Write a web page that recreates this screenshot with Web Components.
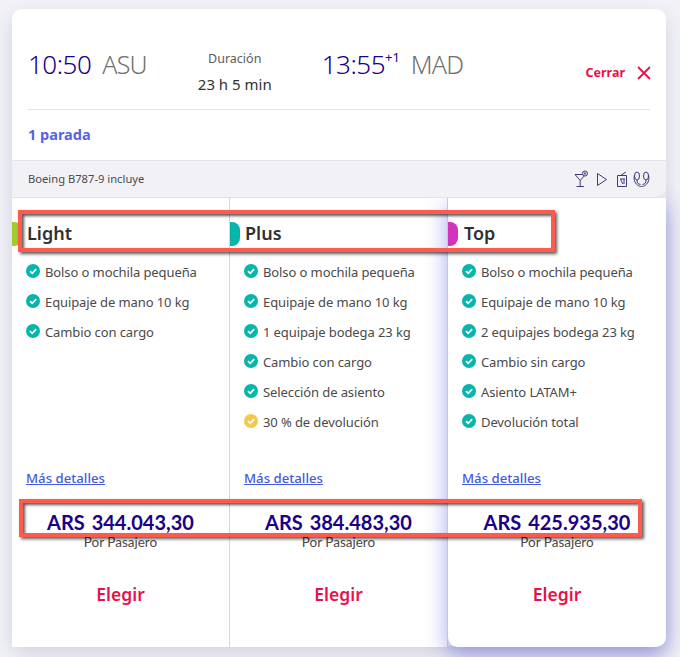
<!DOCTYPE html>
<html lang="es">
<head>
<meta charset="utf-8">
<title>Tarifas</title>
<style>
    html, body { margin: 0; height: 100%; background: #f1f1f7; overflow: hidden; }
    body { font-family: "Noto Sans", "Liberation Sans", sans-serif; color: #303030; }
</style>
</head>
<body>
<fare-panel>
    <flight-summary slot="top"></flight-summary>
    <amenity-bar slot="top">Boeing B787-9 incluye</amenity-bar>
    <fare-column name="Light" tag="#a0cc2c" price="ARS 344.043,30">
        <fare-item>Bolso o mochila pequeña</fare-item>
        <fare-item>Equipaje de mano 10 kg</fare-item>
        <fare-item>Cambio con cargo</fare-item>
    </fare-column>
    <fare-column name="Plus" tag="#07b5ad" price="ARS 384.483,30">
        <fare-item>Bolso o mochila pequeña</fare-item>
        <fare-item>Equipaje de mano 10 kg</fare-item>
        <fare-item>1 equipaje bodega 23 kg</fare-item>
        <fare-item>Cambio con cargo</fare-item>
        <fare-item>Selección de asiento</fare-item>
        <fare-item partial>30 % de devolución</fare-item>
    </fare-column>
    <fare-column name="Top" tag="#d232bc" price="ARS 425.935,30" featured>
        <fare-item>Bolso o mochila pequeña</fare-item>
        <fare-item>Equipaje de mano 10 kg</fare-item>
        <fare-item>2 equipajes bodega 23 kg</fare-item>
        <fare-item>Cambio sin cargo</fare-item>
        <fare-item>Asiento LATAM+</fare-item>
        <fare-item>Devolución total</fare-item>
    </fare-column>
    <mark-box slot="marks" style="left: 6px; top: 201px; width: 537px; height: 42px;"></mark-box>
    <mark-box slot="marks" style="left: 7px; top: 490px; width: 623px; height: 38px;"></mark-box>
</fare-panel>

<script>
class FarePanel extends HTMLElement {
    constructor() {
        super();
        this.attachShadow({mode: 'open'}).innerHTML = `
            <style>
                :host {
                    display: block;
                    position: relative;
                    width: 654px;
                    height: 637px;
                    margin: 9px 0 0 12px;
                    border-radius: 10px;
                    box-shadow: 0 8px 18px rgba(60, 60, 120, 0.16);
                }
                .cols {
                    display: grid;
                    grid-template-columns: 218px 218px 218px;
                    height: 449px;
                }
            </style>
            <slot name="top"></slot>
            <div class="cols"><slot></slot></div>
            <slot name="marks"></slot>
        `;
    }
}

class FlightSummary extends HTMLElement {
    constructor() {
        super();
        this.attachShadow({mode: 'open'}).innerHTML = `
            <style>
                :host { display: block; padding: 0 16px; background: #fff; border-radius: 10px 10px 0 0; position: relative; z-index: 1; }
                .row {
                    display: flex;
                    height: 100px;
                    border-bottom: 1px solid #e1e1e6;
                    align-items: flex-start;
                }
                .time {
                    margin-top: 36px;
                    font-size: 26px;
                    line-height: 38px;
                    font-weight: 300;
                    letter-spacing: -0.5px;
                    color: #1b0088;
                    white-space: nowrap;
                }
                .time sup { font-size: 13px; font-weight: 400; line-height: 0; vertical-align: 12px; letter-spacing: 0; }
                .code { color: #707070; margin-left: 11px; font-size: 25px; letter-spacing: -0.8px; }
                .dur { width: 104px; margin: 40px 0 0 36px; text-align: center; white-space: nowrap; }
                .dur div:first-child { font-size: 12.5px; line-height: 20px; color: #5c5c5c; }
                .dur div:last-child { font-size: 15px; line-height: 30px; color: #303030; }
                .end { margin-left: 35px; }
                .close {
                    margin: 55px -1px 0 auto;
                    display: flex;
                    align-items: center;
                    gap: 12px;
                    font-size: 12.5px;
                    font-weight: 700;
                    color: #e8114b;
                }
                .stops { height: 50px; line-height: 48px; font-size: 14.5px; font-weight: 700; color: #5562e6; }
            </style>
            <div class="row">
                <div class="time">10:50<span class="code">ASU</span></div>
                <div class="dur"><div>Duración</div><div>23 h 5 min</div></div>
                <div class="time end">13:55<sup>+1</sup><span class="code">MAD</span></div>
                <div class="close">Cerrar
                    <svg width="14" height="14" viewBox="0 0 14 14"><path d="M1 1l12 12M13 1L1 13" fill="none" stroke="#e8114b" stroke-width="1.8"/></svg>
                </div>
            </div>
            <div class="stops">1 parada</div>
        `;
    }
}

class AmenityBar extends HTMLElement {
    constructor() {
        super();
        this.attachShadow({mode: 'open'}).innerHTML = `
            <style>
                :host {
                    display: flex;
                    align-items: center;
                    justify-content: space-between;
                    box-sizing: border-box;
                    height: 38px;
                    padding: 0 16px 1px;
                    background: #f1f1f6;
                    border-top: 1px solid #e2e2e7;
                    border-bottom: 1px solid #e2e2e7;
                    border-radius: 0 0 10px 0;
                    font-size: 11.2px;
                    color: #4a4a4a;
                    position: relative;
                    z-index: 1;
                }
                svg { display: block; margin-top: 1px; }
            </style>
            <slot></slot>
            <svg width="76" height="18" viewBox="0 0 76 18" fill="none" stroke="#3f3a78" stroke-width="1">
                <path d="M1 4.500h10.500L6.200 10.500zM6.200 10.500v6M2.500 16.500h7.500"/>
                <circle cx="11" cy="3.500" r="2.500" fill="#f1f1f6"/>
                <circle cx="11" cy="3.500" r="0.700" fill="#3f3a78"/>
                <path d="M23.500 3.500v12L32.500 9.500z"/>
                <path d="M43.500 5.500h9v11h-9zM46.500 5.500L52 2M46 9h5M47 9v1.500M47 10.500l2 3.500M50 9v5"/>
                <ellipse cx="63" cy="6" rx="2.500" ry="4"/>
                <ellipse cx="72" cy="6" rx="2.500" ry="4"/>
                <path d="M60.500 5c-1 4 0 8 3 10 1 1 3 1.500 4 1.500M74.500 5c1 4 0 8-3 10-1 1-3 1.500-4 1.500M63 10c0 3 1 4 3.500 4.500M72 10c0 3-1 4-3.500 4.500"/>
            </svg>
        `;
    }
}

class FareColumn extends HTMLElement {
    constructor() {
        super();
        this.attachShadow({mode: 'open'}).innerHTML = `
            <style>
                :host {
                    display: flex;
                    flex-direction: column;
                    position: relative;
                    box-sizing: border-box;
                    border-right: 1px solid #d6d6e2;
                    background: #fff;
                    min-width: 0;
                }
                :host(:first-child) { border-radius: 0 0 0 10px; }
                :host([featured]) {
                    border-right: 0;
                    border-left: 1px solid #c5c5ea;
                    margin-left: -1px;
                    border-radius: 0 0 10px 10px;
                    box-shadow: 0 8px 22px rgba(70, 70, 210, 0.46);
                }
                :host([featured]) .name { margin-left: 1px; }
                .head {
                    display: flex;
                    align-items: center;
                    gap: 5px;
                    height: 24px;
                    margin-top: 24px;
                    font-size: 18px;
                    font-weight: 600;
                    color: #303030;
                }
                .name { margin-top: -3px; }
                .tag { width: 10px; height: 24px; border-radius: 0 8px 8px 0; background: var(--tag); }
                ul { list-style: none; margin: 11px 0 0; padding: 0 0 0 14px; height: 209px; }
                a { margin-left: 14px; font-size: 13.2px; font-weight: 500; line-height: 20px; color: #4658df; text-decoration: underline; }
                .price { margin-top: 22px; text-align: center; font-family: Lato, "Noto Sans", sans-serif; font-size: 20px; word-spacing: 2px; line-height: 24px; font-weight: 700; color: #1b0088; }
                .per { text-align: center; font-family: Lato, "Noto Sans", sans-serif; font-size: 13.5px; line-height: 16px; color: #4a4a4a; }
                .pick { margin-top: 32px; text-align: center; font-size: 17.5px; line-height: 24px; font-weight: 600; color: #e8114b; }
            </style>
            <div class="head"><span class="tag"></span><span class="name"></span></div>
            <ul><slot></slot></ul>
            <div><a href="#">Más detalles</a></div>
            <div class="price"></div>
            <div class="per">Por Pasajero</div>
            <div class="pick">Elegir</div>
        `;
    }

    connectedCallback() {
        this.shadowRoot.querySelector('.name').textContent = this.getAttribute('name');
        this.shadowRoot.querySelector('.price').textContent = this.getAttribute('price');
        this.style.setProperty('--tag', this.getAttribute('tag'));
    }
}

class FareItem extends HTMLElement {
    constructor() {
        super();
        this.attachShadow({mode: 'open'}).innerHTML = `
            <style>
                :host {
                    display: flex;
                    align-items: center;
                    gap: 5px;
                    height: 30px;
                    font-size: 13px;
                    letter-spacing: -0.1px;
                    color: #4a4a4a;
                    white-space: nowrap;
                }
                svg { flex: none; margin-top: -2px; }
                circle { fill: #07b5ad; }
                :host([partial]) circle { fill: #f5c74e; }
            </style>
            <svg width="14" height="14" viewBox="0 0 14 14">
                <circle cx="7" cy="7" r="7"/>
                <path d="M4 7.200l2.200 2.100L10.200 5.200" fill="none" stroke="#fff" stroke-width="1.700"/>
            </svg>
            <slot></slot>
        `;
    }
}

// recuadros rojos de la captura, van encima de las columnas
class MarkBox extends HTMLElement {
    constructor() {
        super();
        this.attachShadow({mode: 'open'}).innerHTML = `
            <style>
                :host {
                    display: block;
                    position: absolute;
                    z-index: 2;
                    box-sizing: border-box;
                    border: 4px solid #ff5a4e;
                    box-shadow: 2px 2px 3px rgba(0, 0, 0, 0.65), inset 2px 2px 3px rgba(0, 0, 0, 0.65);
                    pointer-events: none;
                }
            </style>
        `;
    }
}

customElements.define('fare-panel', FarePanel);
customElements.define('flight-summary', FlightSummary);
customElements.define('amenity-bar', AmenityBar);
customElements.define('fare-column', FareColumn);
customElements.define('fare-item', FareItem);
customElements.define('mark-box', MarkBox);
</script>
</body>
</html>
